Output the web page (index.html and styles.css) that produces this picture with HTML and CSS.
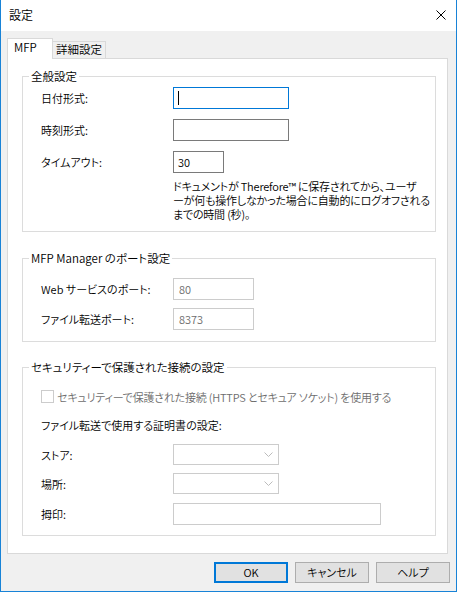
FILE: index.html
```html
<!DOCTYPE html>
<html lang="ja">
<head>
<meta charset="utf-8">
<title>設定</title>
<link rel="stylesheet" href="styles.css">
</head>
<body>
<div class="window">
  <div class="titlebar">
    <span class="title">設定</span>
    <svg class="close" width="10" height="10" viewBox="0 0 10 10"><path d="M0.5 0.5 L9.5 9.5 M9.5 0.5 L0.5 9.5" stroke="#000" stroke-width="1" fill="none"/></svg>
  </div>
  <div class="content">
    <div class="tabs">
      <div class="tab active">MFP</div>
      <div class="tab">詳細設定</div>
    </div>
    <div class="panel">
      <fieldset class="group g1">
        <legend>全般設定</legend>
        <div class="rows">
          <div class="row">
            <span class="label">日付形式:</span>
            <div class="field focus w116"><span class="caret"></span></div>
          </div>
          <div class="row">
            <span class="label">時刻形式:</span>
            <div class="field w116"></div>
          </div>
          <div class="row">
            <span class="label">タイムアウト:</span>
            <div class="field w51">30</div>
          </div>
          <p class="desc">ドキュメントが Therefore™ に保存されてから、ユーザ<br>ーが何も操作しなかった場合に自動的にログオフされる<br>までの時間 (秒)。</p>
        </div>
      </fieldset>
      <fieldset class="group g2">
        <legend>MFP Manager のポート設定</legend>
        <div class="rows">
          <div class="row">
            <span class="label">Web サービスのポート:</span>
            <div class="field disabled w81">80</div>
          </div>
          <div class="row">
            <span class="label">ファイル転送ポート:</span>
            <div class="field disabled w81">8373</div>
          </div>
        </div>
      </fieldset>
      <fieldset class="group g3">
        <legend>セキュリティーで保護された接続の設定</legend>
        <div class="rows">
          <div class="check-row">
            <span class="checkbox"></span>
            <span class="check-label">セキュリティーで保護された接続 (HTTPS とセキュア ソケット) を使用する</span>
          </div>
          <div class="cert-label">ファイル転送で使用する証明書の設定:</div>
          <div class="row combo-row">
            <span class="label">ストア:</span>
            <div class="combo"><svg class="chev" width="9" height="5" viewBox="0 0 9 5"><path d="M0.5 0.5 L4.5 4.5 L8.5 0.5" stroke="#bcbcbc" fill="none"/></svg></div>
          </div>
          <div class="row combo-row second">
            <span class="label">場所:</span>
            <div class="combo"><svg class="chev" width="9" height="5" viewBox="0 0 9 5"><path d="M0.5 0.5 L4.5 4.5 L8.5 0.5" stroke="#bcbcbc" fill="none"/></svg></div>
          </div>
          <div class="row thumb-row">
            <span class="label">拇印:</span>
            <div class="field disabled-border w208"></div>
          </div>
        </div>
      </fieldset>
    </div>
    <div class="buttons">
      <button class="btn default">OK</button>
      <button class="btn">キャンセル</button>
      <button class="btn">ヘルプ</button>
    </div>
  </div>
</div>
</body>
</html>
```

FILE: styles.css
```css
* { box-sizing: border-box; }

html, body {
  margin: 0;
  padding: 0;
}

body {
  width: 457px;
  height: 592px;
  font-family: "Noto Sans CJK JP", "Noto Sans", sans-serif;
  font-size: 11px;
  font-weight: 350;
  font-feature-settings: "palt";
  color: #000;
  overflow: hidden;
}

.window {
  width: 457px;
  height: 592px;
  border: 1px solid #1883d7;
  border-top: none;
  background: #f0f0f0;
  display: flex;
  flex-direction: column;
}

.titlebar {
  height: 31px;
  background: #fff;
  display: flex;
  align-items: center;
  justify-content: space-between;
  padding: 0 9px 2px 8px;
}

.title {
  font-size: 12px;
  line-height: 16px;
}

.close {
  display: block;
  margin-right: 1px;
}

.content {
  flex: 1;
  padding: 7px 8px 0 6px;
  display: flex;
  flex-direction: column;
}

.tabs {
  display: flex;
  align-items: flex-end;
  height: 20px;
  position: relative;
  z-index: 1;
}

.tab {
  height: 17px;
  border: 1px solid #d9d9d9;
  border-bottom: none;
  border-left: none;
  background: #f0f0f0;
  padding: 0 3px;
  line-height: 15px;
  font-size: 11.5px;
}

.tab.active {
  height: 21px;
  margin-bottom: -1px;
  background: #fff;
  border-left: 1px solid #d9d9d9;
  width: 46px;
  padding-left: 6px;
  line-height: 17px;
}

.panel {
  height: 496px;
  background: #fff;
  border: 1px solid #d9d9d9;
  padding: 0 11px 0 14px;
}

.group {
  margin: 0;
  padding: 0;
  border: 1px solid #dcdcdc;
  min-width: 0;
}

.group legend {
  padding: 0 2px;
  margin-left: 6px;
  line-height: 16px;
  font-size: 11.5px;
}

.g1 { margin-top: 9px; }
.g2 { margin-top: 18px; }
.g3 { margin-top: 17px; }

.rows {
  display: flex;
  flex-direction: column;
  padding-left: 18px;
}

.g1 .rows { padding-top: 3px; padding-bottom: 10px; gap: 10px; }
.g2 .rows { padding-top: 12px; padding-bottom: 11px; gap: 8px; }
.g3 .rows { padding-top: 14px; padding-bottom: 10px; }

.row {
  display: flex;
  align-items: center;
  height: 22px;
}

.label {
  width: 132px;
  flex: none;
  white-space: nowrap;
}

.field {
  height: 22px;
  border: 1px solid #7a7a7a;
  background: #fff;
  padding: 0 6px;
  line-height: 20px;
  display: flex;
  align-items: center;
}

.field.focus { border-color: #0078d7; }

.caret {
  display: block;
  width: 1px;
  height: 14px;
  background: #000;
  margin-left: -2px;
}

.field.disabled {
  border-color: #cccccc;
  color: #6d6d6d;
  padding-left: 5px;
}

.field.disabled-border { border-color: #cccccc; }

.w116 { width: 116px; }
.w51 { width: 51px; padding-left: 4px; }
.w81 { width: 81px; }
.w208 { width: 208px; }

.desc {
  margin: -4px 0 0 132px;
  line-height: 14px;
  white-space: nowrap;
  letter-spacing: -0.2px;
}

.check-row {
  display: flex;
  align-items: center;
  height: 15px;
  color: #6d6d6d;
  white-space: nowrap;
}

.check-label { letter-spacing: -0.2px; }

.checkbox {
  width: 13px;
  height: 13px;
  border: 1px solid #cccccc;
  background: #fff;
  margin-right: 3px;
  flex: none;
}

.cert-label {
  margin-top: 13px;
  line-height: 16px;
}

.combo-row {
  height: 21px;
  margin-top: 11px;
}

.combo-row.second { margin-top: 8px; }

.combo {
  width: 106px;
  height: 21px;
  border: 1px solid #cccccc;
  background: #fff;
  display: flex;
  align-items: center;
  justify-content: flex-end;
  padding-right: 5px;
}

.chev { display: block; }

.thumb-row {
  margin-top: 9px;
}

.buttons {
  display: flex;
  justify-content: flex-end;
  gap: 7px;
  margin-top: 8px;
  margin-right: -2px;
}

.btn {
  width: 74px;
  height: 21px;
  margin: 0;
  padding: 0;
  border: 1px solid #adadad;
  background: #e1e1e1;
  font-family: inherit;
  font-size: 11px;
  font-weight: inherit;
  font-feature-settings: "palt";
  color: #000;
  line-height: 19px;
}

.btn.default {
  border: 2px solid #0078d7;
  line-height: 17px;
}
```
